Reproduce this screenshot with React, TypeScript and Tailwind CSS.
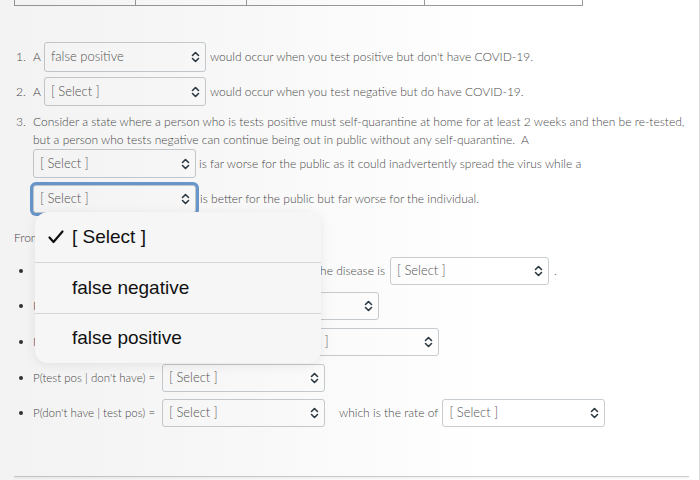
import React from "react"

function Chevrons() {
  return (
    <svg width="9" height="12" viewBox="0 0 9 12" fill="none" stroke="#2d3b45" strokeWidth="1.6" strokeLinecap="round" strokeLinejoin="round">
      <path d="M1.5 4.5 L4.5 1.5 L7.5 4.5" />
      <path d="M1.5 7.5 L4.5 10.5 L7.5 7.5" />
    </svg>
  )
}

function Select({ value = "[ Select ]", w = "w-[163px]", h = "h-[28px]", focus = false, className = "" }: { value?: string; w?: string; h?: string; focus?: boolean; className?: string }) {
  return (
    <div
      className={`${w} ${h} shrink-0 flex items-center justify-between pl-[6px] pr-[5px] bg-white border border-[#c7cdd1] rounded-[3px] text-[13px] text-[#555] ${
        focus ? "ring-[3px] ring-[#6c9bd2]" : ""
      } ${className}`}
    >
      <span className="whitespace-nowrap">{value}</span>
      <Chevrons />
    </div>
  )
}

function Bullet() {
  return (
    <span className="w-[19px] shrink-0 flex pl-[5px]">
      <span className="w-[4px] h-[4px] rounded-full bg-[#333]" />
    </span>
  )
}

export default function App() {
  return (
    <div className="relative w-[700px] h-[480px] overflow-hidden bg-white font-['Lato','Open_Sans',sans-serif] font-light text-[12px] text-[#4a4a4a] border-r border-[#dcdcdc]">
      <div className="pl-[14px] pr-[10px]">
        {/* bottom of the table above */}
        <div className="flex w-[569px] h-[6px] border border-t-0 border-[#9a9a9a]">
          <div className="w-[121px] border-r border-[#9a9a9a]" />
          <div className="w-[111px] border-r border-[#9a9a9a]" />
          <div className="w-[178px] border-r border-[#9a9a9a]" />
          <div className="flex-1" />
        </div>

        <div className="mt-[36px]">
          <div className="flex items-center h-[30px]">
            <span className="w-[19px] shrink-0 pl-[2px]">1.</span>
            <span>A</span>
            <Select value="false positive" w="w-[162px]" h="h-[30px]" className="ml-[3px]" />
            <span className="ml-[4px]">would occur when you test positive but don't have COVID-19.</span>
          </div>
          <div className="flex items-center h-[29px] mt-[5px]">
            <span className="w-[19px] shrink-0 pl-[2px]">2.</span>
            <span>A</span>
            <Select w="w-[162px]" h="h-[29px]" className="ml-[3px]" />
            <span className="ml-[4px]">would occur when you test negative but do have COVID-19.</span>
          </div>
          <div className="flex mt-[7px]">
            <span className="w-[19px] shrink-0 pl-[2px] leading-[18px]">3.</span>
            <div>
              <p className="leading-[18px]">
                Consider a state where a person who is tests positive must self-quarantine at home for at least 2 weeks and then be re-tested,
                but a person who tests negative can continue being out in public without any self-quarantine.&nbsp; A
              </p>
              <div className="flex items-center">
                <Select h="h-[29px]" />
                <span className="ml-[3px]">is far worse for the public as it could inadvertently spread the virus while a</span>
              </div>
              <div className="flex items-center mt-[7px]">
                <Select focus />
                <span className="ml-[4px]">is better for the public but far worse for the individual.</span>
              </div>
            </div>
          </div>
        </div>

        <p className="mt-[16px] leading-[18px]">From the information given above, fill in the following:</p>

        <div className="mt-[10px]">
          <div className="flex items-center h-[28px]">
            <Bullet />
            <span className="w-[352px] whitespace-nowrap flex justify-end">
              The probability that someone who tests positive has the disease is
            </span>
            <Select w="w-[159px]" className="ml-[5px]" />
            <span className="ml-[5px]">.</span>
          </div>
          <div className="flex items-center h-[28px] mt-[7px]">
            <Bullet />
            <span className="w-[180px] whitespace-nowrap">P(have disease) =</span>
            <Select className="ml-[3px]" />
          </div>
          <div className="flex items-center h-[28px] mt-[8px]">
            <Bullet />
            <span className="w-[237px] whitespace-nowrap">P(test pos) =</span>
            <Select w="w-[166px]" className="ml-[3px]" />
          </div>
          <div className="flex items-center h-[28px] mt-[8px]">
            <Bullet />
            <span className="w-[126px] shrink-0 whitespace-nowrap text-[11.5px]">P(test pos | don't have) =</span>
            <Select className="ml-[3px]" />
          </div>
          <div className="flex items-center h-[28px] mt-[7px]">
            <Bullet />
            <span className="w-[126px] shrink-0 whitespace-nowrap text-[11.5px]">P(don't have | test pos) =</span>
            <Select className="ml-[3px]" />
            <span className="ml-[14px]">which is the rate of</span>
            <Select className="ml-[4px]" />
          </div>
        </div>

        <div className="mt-[49px] h-px bg-[#cfcfcf] shadow-[0_1px_2px_rgba(0,0,0,0.12)]" />
      </div>

      {/* dim backdrop behind the picker */}
      <div className="pointer-events-none absolute inset-0 bg-linear-to-r from-black/[0.05] via-black/[0.025] via-40% to-transparent to-70%" />

      {/* native select picker */}
      <div className="absolute left-[35px] top-[212px] w-[286px] rounded-[13px] bg-[#f6f6f6] shadow-[0_2px_12px_rgba(0,0,0,0.08)] font-['Liberation_Sans','Noto_Sans',sans-serif] font-normal text-[19px] text-[#111] overflow-hidden">
        <div className="h-[50px] flex items-center">
          <svg className="ml-[13px] mr-[8px]" width="16" height="14" viewBox="0 0 16 14" fill="none" stroke="#111" strokeWidth="2.2" strokeLinecap="round" strokeLinejoin="round">
            <path d="M1.5 7.5 L5.5 12 L14.5 1.5" />
          </svg>
          <span>[ Select ]</span>
        </div>
        <div className="h-px bg-[#d6d6d6]" />
        <div className="h-[50px] flex items-center pl-[37px]">false negative</div>
        <div className="h-px bg-[#d6d6d6]" />
        <div className="h-[49px] flex items-center pl-[37px]">false positive</div>
      </div>
    </div>
  )
}
